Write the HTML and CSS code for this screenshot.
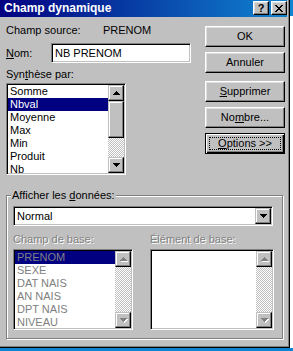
FILE: index.html
```html
<!DOCTYPE html>
<html lang="fr">
<head>
  <meta charset="UTF-8">
  <title>Champ dynamique</title>
  <link rel="stylesheet" href="styles.css">
</head>
<body>
  <div class="window">
    <div class="titlebar">
      <span class="title">Champ dynamique</span>
      <div class="title-btns">
        <span class="tbtn help">?</span>
        <span class="tbtn">
          <svg width="8" height="7" viewBox="0 0 8 7"><path d="M0 0h2v1H0zM6 0h2v1H6zM1 1h2v1H1zM5 1h2v1H5zM2 2h4v1H2zM3 3h2v1H3zM2 4h4v1H2zM1 5h2v1H1zM5 5h2v1H5zM0 6h2v1H0zM6 6h2v1H6z" fill="#000"/></svg>
        </span>
      </div>
    </div>

    <div class="content">
      <div class="top">
        <div class="left">
          <div class="row-source">
            <span class="source-lbl">Champ source:</span>
            <span>PRENOM</span>
          </div>
          <div class="row-nom">
            <span class="nom-lbl"><u>N</u>om:</span>
            <div class="textbox">NB PRENOM</div>
          </div>
          <div class="lbl synth-lbl">Syn<u>t</u>hèse par:</div>
          <div class="listbox synth-list">
            <ul class="items">
              <li>Somme</li>
              <li class="sel">Nbval</li>
              <li>Moyenne</li>
              <li>Max</li>
              <li>Min</li>
              <li>Produit</li>
              <li>Nb</li>
            </ul>
            <div class="scrollbar">
              <div class="sb-btn"><svg width="7" height="4" viewBox="0 0 7 4"><path d="M3 0h1v1H3zM2 1h3v1H2zM1 2h5v1H1zM0 3h7v1H0z" fill="#000"/></svg></div>
              <div class="sb-thumb"></div>
              <div class="sb-track"></div>
              <div class="sb-btn"><svg width="7" height="4" viewBox="0 0 7 4"><path d="M0 0h7v1H0zM1 1h5v1H1zM2 2h3v1H2zM3 3h1v1H3z" fill="#000"/></svg></div>
            </div>
          </div>
        </div>

        <div class="buttons">
          <div class="btn">OK</div>
          <div class="btn">Annuler</div>
          <div class="btn gap"><u>S</u>upprimer</div>
          <div class="btn">No<u>m</u>bre...</div>
          <div class="btn default"><u>O</u>ptions &gt;&gt;</div>
        </div>
      </div>

      <div class="group">
        <span class="legend">Afficher les <u>d</u>onnées:</span>
        <div class="combo">
          <span class="combo-text">Normal</span>
          <div class="sb-btn"><svg width="7" height="4" viewBox="0 0 7 4"><path d="M0 0h7v1H0zM1 1h5v1H1zM2 2h3v1H2zM3 3h1v1H3z" fill="#000"/></svg></div>
        </div>

        <div class="base-row">
          <div class="base-col">
            <div class="lbl disabled">Champ de base:</div>
            <div class="listbox base-list">
              <ul class="items gray">
                <li class="sel">PRENOM</li>
                <li>SEXE</li>
                <li>DAT NAIS</li>
                <li>AN NAIS</li>
                <li>DPT NAIS</li>
                <li>NIVEAU</li>
              </ul>
              <div class="scrollbar">
                <div class="sb-btn off"><svg width="8" height="5" viewBox="0 0 8 5"><path d="M4 1h1v1H4zM3 2h3v1H3zM2 3h5v1H2zM1 4h7v1H1z" fill="#fff"/><path d="M3 0h1v1H3zM2 1h3v1H2zM1 2h5v1H1zM0 3h7v1H0z" fill="#808080"/></svg></div>
                <div class="sb-track"></div>
                <div class="sb-btn off"><svg width="8" height="5" viewBox="0 0 8 5"><path d="M1 1h7v1H1zM2 2h5v1H2zM3 3h3v1H3zM4 4h1v1H4z" fill="#fff"/><path d="M0 0h7v1H0zM1 1h5v1H1zM2 2h3v1H2zM3 3h1v1H3z" fill="#808080"/></svg></div>
              </div>
            </div>
          </div>
          <div class="base-col wide">
            <div class="lbl disabled">Élément de base:</div>
            <div class="listbox base-list">
              <ul class="items"></ul>
              <div class="scrollbar">
                <div class="sb-btn off"><svg width="8" height="5" viewBox="0 0 8 5"><path d="M4 1h1v1H4zM3 2h3v1H3zM2 3h5v1H2zM1 4h7v1H1z" fill="#fff"/><path d="M3 0h1v1H3zM2 1h3v1H2zM1 2h5v1H1zM0 3h7v1H0z" fill="#808080"/></svg></div>
                <div class="sb-track"></div>
                <div class="sb-btn off"><svg width="8" height="5" viewBox="0 0 8 5"><path d="M1 1h7v1H1zM2 2h5v1H2zM3 3h3v1H3zM4 4h1v1H4z" fill="#fff"/><path d="M0 0h7v1H0zM1 1h5v1H1zM2 2h3v1H2zM3 3h1v1H3z" fill="#808080"/></svg></div>
              </div>
            </div>
          </div>
        </div>
      </div>
    </div>
  </div>
</body>
</html>
```

FILE: styles.css
```css
* {
  box-sizing: border-box;
}
body {
  margin: 0;
  background: linear-gradient(#1084d0 0 16px, #fff 16px);
  font-family: "Liberation Sans", Arial, sans-serif;
  font-size: 11px;
  line-height: 13px;
  color: #000;
}

.window {
  width: 290px;
  height: 348px;
  background: #c0c0c0;
  border-right: 1px solid #000;
  border-bottom: 1px solid #000;
  box-shadow: inset -1px -1px 0 #808080;
  padding-right: 2px;
}

.titlebar {
  height: 17px;
  background: linear-gradient(to right, #000080, #1084d0);
  display: flex;
  align-items: center;
  justify-content: space-between;
  padding-left: 4px;
  color: #fff;
  font-weight: bold;
  font-size: 12px;
}
.title-btns {
  display: flex;
  gap: 2px;
  align-self: flex-start;
  margin-top: 1px;
}
.tbtn {
  width: 16px;
  height: 14px;
  background: #c0c0c0;
  border: 1px solid;
  border-color: #fff #000 #000 #fff;
  box-shadow: inset -1px -1px 0 #808080, inset 1px 1px 0 #dfdfdf;
  display: flex;
  align-items: center;
  justify-content: center;
  color: #000;
}
.tbtn.help {
  font-size: 11px;
  line-height: 12px;
}
.tbtn svg {
  display: block;
}

.content {
  padding-left: 6px;
}
.top {
  display: flex;
  gap: 14px;
}
.left {
  width: 185px;
}
.row-source {
  display: flex;
  margin-top: 7px;
}
.source-lbl {
  width: 97px;
}
.row-nom {
  display: flex;
  align-items: center;
  margin-top: 6px;
}
.nom-lbl {
  width: 45px;
}
.textbox {
  width: 140px;
  height: 20px;
  background: #fff;
  border: 1px solid;
  border-color: #808080 #fff #fff #808080;
  box-shadow: inset 1px 1px 0 #000, inset -1px -1px 0 #c0c0c0;
  padding: 3px 0 0 3px;
}
.synth-lbl {
  margin-top: 5px;
}

.listbox {
  display: flex;
  background: #fff;
  border: 1px solid;
  border-color: #808080 #fff #fff #808080;
  box-shadow: inset 1px 1px 0 #000, inset -1px -1px 0 #c0c0c0;
  padding: 1px;
  overflow: hidden;
}
.synth-list {
  width: 120px;
  height: 92px;
  margin-top: 2px;
}
.items {
  list-style: none;
  margin: 0;
  padding: 0;
  flex: 1;
  overflow: hidden;
}
.items li {
  height: 13px;
  padding-left: 2px;
  white-space: nowrap;
}
.items li.sel {
  background: #000080;
  color: #fff;
}
.items.gray li {
  color: #808080;
}

.scrollbar {
  width: 16px;
  display: flex;
  flex-direction: column;
}
.sb-btn {
  width: 16px;
  height: 16px;
  flex: none;
  background: #c0c0c0;
  border: 1px solid;
  border-color: #c0c0c0 #000 #000 #c0c0c0;
  box-shadow: inset -1px -1px 0 #808080, inset 1px 1px 0 #fff;
  display: flex;
  align-items: center;
  justify-content: center;
}
.sb-btn svg {
  display: block;
}
.sb-btn.off svg {
  margin-left: 1px;
  margin-top: 1px;
}
.sb-thumb {
  height: 37px;
  flex: none;
  background: #c0c0c0;
  border: 1px solid;
  border-color: #c0c0c0 #000 #000 #c0c0c0;
  box-shadow: inset -1px -1px 0 #808080, inset 1px 1px 0 #fff;
}
.sb-track {
  flex: 1;
  background: repeating-conic-gradient(#c0c0c0 0 25%, #fff 0 50%) 0 0 / 2px 2px;
}

.buttons {
  width: 80px;
  padding-top: 9px;
  display: flex;
  flex-direction: column;
  gap: 5px;
}
.btn {
  height: 21px;
  background: #c0c0c0;
  border: 1px solid;
  border-color: #fff #000 #000 #fff;
  box-shadow: inset -1px -1px 0 #808080, inset 1px 1px 0 #dfdfdf;
  display: flex;
  align-items: center;
  justify-content: center;
}
.btn.gap {
  margin-top: 3px;
}
.btn.default {
  position: relative;
  border-color: #000;
  box-shadow: inset 1px 1px 0 #fff, inset -1px -1px 0 #000, inset -2px -2px 0 #808080;
}
.btn.default::after {
  content: "";
  position: absolute;
  inset: 3px;
  border: 1px dotted #000;
}

.group {
  position: relative;
  width: 277px;
  height: 144px;
  margin-top: 20px;
  border: 1px solid #808080;
  box-shadow: 1px 1px 0 #fff, inset 1px 1px 0 #fff;
  padding: 10px 0 0 6px;
}
.legend {
  position: absolute;
  top: -7px;
  left: 4px;
  padding: 0 1px;
  background: #c0c0c0;
}
.combo {
  width: 260px;
  height: 20px;
  display: flex;
  align-items: center;
  background: #fff;
  border: 1px solid;
  border-color: #808080 #fff #fff #808080;
  box-shadow: inset 1px 1px 0 #000, inset -1px -1px 0 #c0c0c0;
  padding: 1px;
}
.combo-text {
  flex: 1;
  padding-left: 2px;
}

.base-row {
  display: flex;
  gap: 17px;
  margin-top: 7px;
}
.base-col {
  width: 120px;
}
.base-col.wide {
  width: 124px;
}
.lbl.disabled {
  color: #808080;
  text-shadow: 1px 1px 0 #fff;
}
.base-list {
  height: 81px;
  margin-top: 3px;
}
```
